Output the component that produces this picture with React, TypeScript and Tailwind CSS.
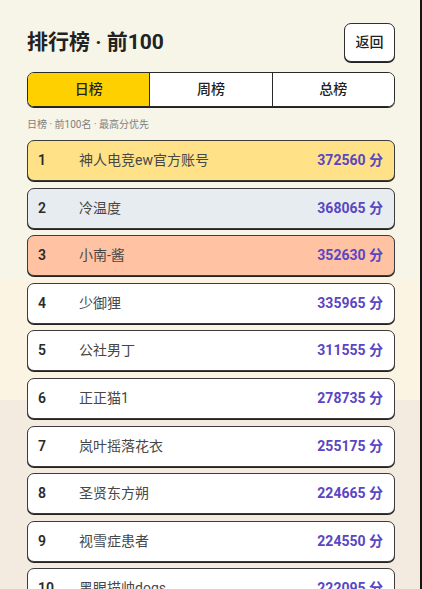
import { useState } from 'react'

type Entry = { rank: number; name: string; score: number }

const ENTRIES: Entry[] = [
  { rank: 1, name: '神人电竞ew官方账号', score: 372560 },
  { rank: 2, name: '冷温度', score: 368065 },
  { rank: 3, name: '小南-酱', score: 352630 },
  { rank: 4, name: '少御狸', score: 335965 },
  { rank: 5, name: '公社男丁', score: 311555 },
  { rank: 6, name: '正正猫1', score: 278735 },
  { rank: 7, name: '岚叶摇落花衣', score: 255175 },
  { rank: 8, name: '圣贤东方朔', score: 224665 },
  { rank: 9, name: '视雪症患者', score: 224550 },
  { rank: 10, name: '黑眼描帅dogs', score: 222095 },
  { rank: 11, name: '晚风', score: 219870 },
]

const TABS = ['日榜', '周榜', '总榜']

const FONT = "font-['Roboto','Noto_Sans_CJK_SC',sans-serif]"

function rowBg(rank: number) {
  if (rank === 1) return 'bg-[#ffe187]'
  if (rank === 2) return 'bg-[#e7ecf1]'
  if (rank === 3) return 'bg-[#ffc3a3]'
  return 'bg-white'
}

export default function App() {
  const [tab, setTab] = useState(0)

  return (
    <div
      className={`${FONT} min-h-[589px] h-[589px] overflow-hidden border-r-2 border-[#151515] bg-[linear-gradient(180deg,#f7f5e8_0px,#f7f5e8_280px,#fcf4e2_280px,#fcf4e2_400px,#f3ebe0_400px)] pl-[27px] pr-[25px]`}
    >
      {/* Header */}
      <div className="flex items-center justify-between pt-[23px]">
        <h1 className="text-[21px] font-bold leading-none text-[#222]">排行榜 · 前100</h1>
        <button className="h-[39px] w-[51px] rounded-[7px] border-[1.5px] border-[#2f2f2f] bg-white text-[14px] font-medium text-[#222] shadow-[0_1px_0_#222]">
          返回
        </button>
      </div>

      {/* Tabs */}
      <div className="mt-[10px] flex h-[35px] overflow-hidden rounded-[7px] border-[1.5px] border-[#2a2a2a] shadow-[0_1px_0_#222]">
        {TABS.map((t, i) => (
          <button
            key={t}
            onClick={() => setTab(i)}
            className={`flex-1 text-[14px] font-medium text-[#222] ${i > 0 ? 'border-l-[1.5px] border-[#2a2a2a]' : ''} ${
              tab === i ? 'bg-[#ffd000]' : 'bg-white'
            }`}
          >
            {t}
          </button>
        ))}
      </div>

      <p className="mt-[12px] text-[10px] leading-[12px] text-[#808080]">日榜 · 前100名 · 最高分优先</p>

      {/* List */}
      <div className="mt-[9px] flex flex-col gap-[6.6px]">
        {ENTRIES.map((e) => (
          <div
            key={e.rank}
            className={`flex h-[41px] shrink-0 items-center rounded-[7px] border-[1.5px] border-[#3c3c3c] pl-[10px] pr-[11px] shadow-[0_1px_0_#222] ${rowBg(e.rank)}`}
          >
            <span className="w-[41px] text-[14px] font-semibold text-[#2a2a2a]">{e.rank}</span>
            <span className="flex-1 truncate text-[14px] text-[#474747]">{e.name}</span>
            <span className="text-[14px] font-bold text-[#5a46c2]">{e.score} 分</span>
          </div>
        ))}
      </div>
    </div>
  )
}
